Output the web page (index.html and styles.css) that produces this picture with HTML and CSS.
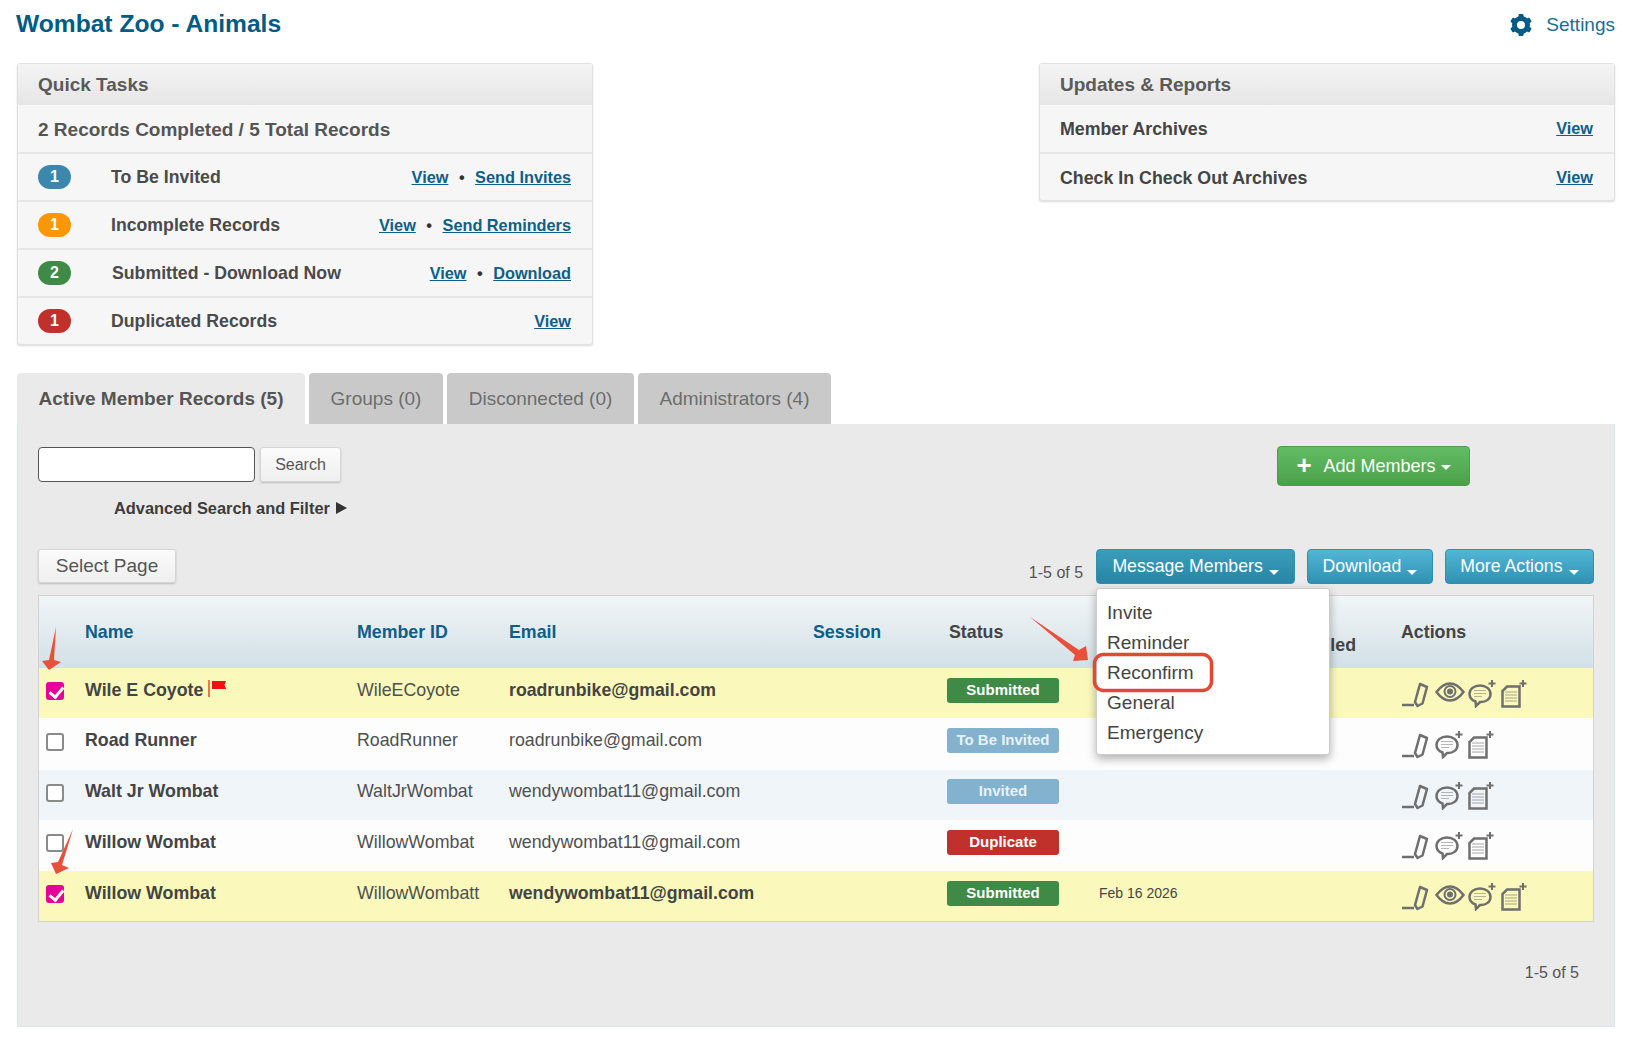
FILE: index.html
```html
<!DOCTYPE html>
<html lang="en">
<head>
    <meta charset="UTF-8">
    <meta name="viewport" content="width=device-width, initial-scale=1.0">
    <title>Wombat Zoo - Animals</title>
    <link rel="stylesheet" href="styles.css">
</head>
<body>
    <svg class="icon-defs" width="0" height="0">
        <symbol id="i-edit" viewBox="0 0 33 28">
            <path d="M0 25h12" fill="none" stroke-width="2.500"/>
            <path d="M13 22l5-18 7 3-4.500 16.500-5 2.500z" fill="none" stroke-width="2.500" stroke-linejoin="round"/>
        </symbol>
        <symbol id="i-eye" viewBox="0 0 33 28">
            <path d="M1.500 12C6 6 10 3.500 15 3.500S24 6 28.500 12C24 18 20 20.500 15 20.500S6 18 1.500 12z" fill="none" stroke-width="2.500"/>
            <circle cx="15" cy="11.500" r="5.500" fill="none" stroke-width="2"/>
            <circle cx="15" cy="11.500" r="3" stroke="none"/>
        </symbol>
        <symbol id="i-note" viewBox="0 0 33 28">
            <path d="M12 5.500c6 0 10.500 3.500 10.500 8.500s-4.500 8-9.500 8h-1l-4 4-.5-4.500C3.500 20 1.500 17.500 1.500 14c0-5 4.500-8.500 10.500-8.500z" fill="none" stroke-width="2.500"/>
            <path d="M6 10.500h12M6 13.500h12M6 16.500h8" fill="none" stroke-width="1" opacity="0.5"/>
            <path d="M24 0v7M20.500 3.500h7" fill="none" stroke-width="2"/>
        </symbol>
        <symbol id="i-doc" viewBox="0 0 33 28">
            <path d="M6 6.500h12.500v20h-17V11z" fill="none" stroke-width="2.500"/>
            <path d="M4 12h12M4 15h12M4 18h12M4 21h12" fill="none" stroke-width="1" opacity="0.6"/>
            <path d="M22 0v7M18.500 3.500h7" fill="none" stroke-width="2"/>
        </symbol>
    </svg>

    <div class="page">
        <header class="top-bar">
            <h1>Wombat Zoo - Animals</h1>
            <a class="settings" href="#">
                <svg class="gear" viewBox="0 0 24 24" width="24" height="24">
                    <circle cx="12" cy="12" r="6.500" fill="none" stroke="#005b85" stroke-width="5"/>
                    <g fill="#005b85">
                        <rect x="9.500" y="1" width="5" height="5" rx="1"/>
                        <rect x="9.500" y="1" width="5" height="5" rx="1" transform="rotate(60 12 12)"/>
                        <rect x="9.500" y="1" width="5" height="5" rx="1" transform="rotate(120 12 12)"/>
                        <rect x="9.500" y="1" width="5" height="5" rx="1" transform="rotate(180 12 12)"/>
                        <rect x="9.500" y="1" width="5" height="5" rx="1" transform="rotate(240 12 12)"/>
                        <rect x="9.500" y="1" width="5" height="5" rx="1" transform="rotate(300 12 12)"/>
                    </g>
                </svg>
                <span>Settings</span>
            </a>
        </header>

        <div class="summary">
            <section class="panel">
                <h2 class="panel-head">Quick Tasks</h2>
                <div class="panel-row panel-row-first"><span class="total">2 Records Completed / 5 Total Records</span></div>
                <div class="panel-row">
                    <span class="count count-blue">1</span>
                    <span class="task">To Be Invited</span>
                    <span class="links"><a href="#">View</a><i>•</i><a href="#">Send Invites</a></span>
                </div>
                <div class="panel-row">
                    <span class="count count-orange">1</span>
                    <span class="task">Incomplete Records</span>
                    <span class="links"><a href="#">View</a><i>•</i><a href="#">Send Reminders</a></span>
                </div>
                <div class="panel-row">
                    <span class="count count-green">2</span>
                    <span class="task task-shift">Submitted - Download Now</span>
                    <span class="links"><a href="#">View</a><i>•</i><a href="#">Download</a></span>
                </div>
                <div class="panel-row">
                    <span class="count count-red">1</span>
                    <span class="task">Duplicated Records</span>
                    <span class="links"><a href="#">View</a></span>
                </div>
            </section>

            <section class="panel">
                <h2 class="panel-head">Updates &amp; Reports</h2>
                <div class="panel-row panel-row-first">
                    <span class="archive">Member Archives</span>
                    <span class="links"><a href="#">View</a></span>
                </div>
                <div class="panel-row">
                    <span class="archive">Check In Check Out Archives</span>
                    <span class="links"><a href="#">View</a></span>
                </div>
            </section>
        </div>

        <nav class="tabs">
            <a class="tab tab-active" href="#">Active Member Records (5)</a>
            <a class="tab" href="#">Groups (0)</a>
            <a class="tab" href="#">Disconnected (0)</a>
            <a class="tab" href="#">Administrators (4)</a>
        </nav>

        <div class="tab-body">
            <div class="search-bar">
                <div class="search-left">
                    <div class="search-form">
                        <input class="search-input" type="text">
                        <button class="btn-plain btn-search">Search</button>
                    </div>
                    <div class="advanced">Advanced Search and Filter <span class="advanced-arrow"></span></div>
                </div>
                <button class="btn-add"><b class="plus">+</b>Add Members<span class="caret caret-add"></span></button>
            </div>

            <div class="toolbar">
                <button class="btn-plain btn-select">Select Page</button>
                <div class="toolbar-right">
                    <span class="paging">1-5 of 5</span>
                    <div class="menu-wrap">
                        <button class="btn-blue btn-open">Message Members<span class="caret"></span></button>
                        <ul class="menu">
                            <li>Invite</li>
                            <li>Reminder</li>
                            <li>Reconfirm</li>
                            <li>General</li>
                            <li>Emergency</li>
                        </ul>
                    </div>
                    <button class="btn-blue">Download<span class="caret"></span></button>
                    <button class="btn-blue">More Actions<span class="caret"></span></button>
                </div>
            </div>

            <table class="members">
                <colgroup>
                    <col class="col-check"><col class="col-name"><col class="col-id"><col class="col-email">
                    <col class="col-session"><col class="col-status"><col class="col-date"><col class="col-actions">
                </colgroup>
                <thead>
                    <tr>
                        <th></th>
                        <th>Name</th>
                        <th>Member ID</th>
                        <th>Email</th>
                        <th>Session</th>
                        <th class="th-dark">Status</th>
                        <th class="th-date">Enrolled</th>
                        <th class="th-dark">Actions</th>
                    </tr>
                </thead>
                <tbody>
                    <tr class="row-done">
                        <td><input class="check" type="checkbox" checked></td>
                        <td class="name">Wile E Coyote <svg class="flag" width="18" height="18" viewBox="0 0 18 18"><rect x="0" y="0" width="2" height="17" fill="#f0764a"/><path d="M4 1h14l-1.500 4 1.500 4H4z" fill="#f01010"/></svg></td>
                        <td>WileECoyote</td>
                        <td class="email">roadrunbike@gmail.com</td>
                        <td></td>
                        <td><span class="status status-green">Submitted</span></td>
                        <td></td>
                        <td class="act-cell"><div class="acts">
                            <svg><use href="#i-edit"/></svg><svg><use href="#i-eye"/></svg><svg><use href="#i-note"/></svg><svg><use href="#i-doc"/></svg>
                        </div></td>
                    </tr>
                    <tr>
                        <td><input class="check" type="checkbox"></td>
                        <td class="name">Road Runner</td>
                        <td>RoadRunner</td>
                        <td>roadrunbike@gmail.com</td>
                        <td></td>
                        <td><span class="status status-light">To Be Invited</span></td>
                        <td></td>
                        <td class="act-cell"><div class="acts">
                            <svg><use href="#i-edit"/></svg><svg><use href="#i-note"/></svg><svg><use href="#i-doc"/></svg>
                        </div></td>
                    </tr>
                    <tr class="row-alt">
                        <td><input class="check" type="checkbox"></td>
                        <td class="name">Walt Jr Wombat</td>
                        <td>WaltJrWombat</td>
                        <td>wendywombat11@gmail.com</td>
                        <td></td>
                        <td><span class="status status-light">Invited</span></td>
                        <td></td>
                        <td class="act-cell"><div class="acts">
                            <svg><use href="#i-edit"/></svg><svg><use href="#i-note"/></svg><svg><use href="#i-doc"/></svg>
                        </div></td>
                    </tr>
                    <tr>
                        <td><input class="check" type="checkbox"></td>
                        <td class="name">Willow Wombat</td>
                        <td>WillowWombat</td>
                        <td>wendywombat11@gmail.com</td>
                        <td></td>
                        <td><span class="status status-red">Duplicate</span></td>
                        <td></td>
                        <td class="act-cell"><div class="acts">
                            <svg><use href="#i-edit"/></svg><svg><use href="#i-note"/></svg><svg><use href="#i-doc"/></svg>
                        </div></td>
                    </tr>
                    <tr class="row-done">
                        <td><input class="check" type="checkbox" checked></td>
                        <td class="name">Willow Wombat</td>
                        <td>WillowWombatt</td>
                        <td class="email">wendywombat11@gmail.com</td>
                        <td></td>
                        <td><span class="status status-green">Submitted</span></td>
                        <td class="date">Feb 16 2026</td>
                        <td class="act-cell"><div class="acts">
                            <svg><use href="#i-edit"/></svg><svg><use href="#i-eye"/></svg><svg><use href="#i-note"/></svg><svg><use href="#i-doc"/></svg>
                        </div></td>
                    </tr>
                </tbody>
            </table>

            <div class="paging paging-bottom">1-5 of 5</div>
        </div>

        <!-- red notes drawn on top of the screen -->
        <svg class="notes" width="1625" height="1037" viewBox="0 0 1625 1037">
            <g fill="#e8503a">
                <path d="M56 627L54 660l7 2-12 8-7-9 7-1z"/>
                <path d="M73 829L62 865l7 3-13 6-5-11 7-1z"/>
                <path d="M1030 617l49 33 7-4 2 14-15 1 2-6z"/>
            </g>
            <rect x="1094.500" y="654.500" width="117" height="36" rx="9" fill="none" stroke="#e04a32" stroke-width="3.500"/>
        </svg>
    </div>
</body>
</html>
```

FILE: styles.css
```css
* {
    box-sizing: border-box;
}

body {
    margin: 0;
    background-color: white;
    color: #444;
    font-family: "Liberation Sans", Arial, sans-serif;
    font-size: 18px;
}

a {
    color: #0d5f8a;
}

.icon-defs {
    position: absolute;
}

.page {
    position: relative;
    height: 1037px;
    padding: 0 10px 0 17px;
    overflow: hidden;
}

.top-bar {
    display: flex;
    justify-content: space-between;
    align-items: center;
    height: 49px;
    margin-bottom: 14px;
}

h1 {
    margin: 0 0 2px -1px;
    font-size: 24.600px;
    color: #005b85;
}

.settings {
    display: flex;
    align-items: center;
    gap: 13px;
    font-size: 19px;
    text-decoration: none;
    color: #1c6c94;
}

.summary {
    display: flex;
    justify-content: space-between;
    align-items: flex-start;
    height: 310px;
}

.panel {
    width: 576px;
    background-color: #f6f6f6;
    border: 1px solid #e2e2e2;
    border-radius: 3px;
    box-shadow: 0 1px 2px rgba(0, 0, 0, 0.15);
}

.panel-head {
    margin: 0;
    height: 41px;
    line-height: 41px;
    padding-left: 20px;
    font-size: 19px;
    color: #5a5a5a;
    background: linear-gradient(#f4f4f4, #e6e6e6);
}

.panel-row {
    display: flex;
    align-items: center;
    height: 48px;
    padding: 0 21px 0 20px;
    border-top: 2px solid #e6e6e6;
}

.panel-row-first {
    height: 47px;
    border-top: none;
}

.total {
    margin-top: 2px;
    font-size: 19px;
    font-weight: bold;
    color: #555;
}

.count {
    width: 33px;
    height: 24px;
    border-radius: 12px;
    text-align: center;
    line-height: 24px;
    font-size: 16px;
    font-weight: bold;
    color: white;
}

.count-blue { background-color: #3d87ad; }
.count-orange { background-color: #fb9705; }
.count-green { background-color: #3f8a46; }
.count-red { background-color: #c0312c; }

.task {
    margin-left: 40px;
    font-size: 17.700px;
    font-weight: bold;
    color: #4a4a4a;
}

.task-shift {
    margin-left: 41px;
}

.archive {
    margin-top: 2px;
    font-size: 17.800px;
    font-weight: bold;
    color: #444;
}

.links {
    margin-left: auto;
    font-size: 16.300px;
    font-weight: bold;
}

.links i {
    margin: 0 10.500px;
    font-style: normal;
    color: #333;
}

.tabs {
    display: flex;
    gap: 4px;
    height: 51px;
}

.tab {
    width: 134px;
    padding-top: 15px;
    text-align: center;
    font-size: 19px;
    text-decoration: none;
    color: #6d6d6d;
    background-color: #c9c9c9;
    border-radius: 4px 4px 0 0;
}

.tab:nth-child(3) { width: 187px; }
.tab:nth-child(4) { width: 193px; }

.tab-active {
    width: 288px;
    font-weight: bold;
    color: #555;
    background-color: #eaeaea;
}

.tab-body {
    height: 603px;
    padding: 23px 20px 0 20px;
    background-color: #eaeaea;
    border: 1px solid #d8e6ee;
    border-top: none;
}

.search-bar {
    display: flex;
    justify-content: space-between;
    align-items: flex-start;
    height: 102px;
    padding-right: 124px;
}

.search-form {
    display: flex;
    gap: 5px;
}

.search-input {
    width: 217px;
    height: 35px;
    border: 1px solid #555;
    border-radius: 4px;
    background-color: white;
}

.btn-plain {
    border: 1px solid #d6d6d6;
    border-radius: 3px;
    background: linear-gradient(#fbfbfb, #efefef);
    box-shadow: 0 1px 2px rgba(0, 0, 0, 0.2);
    color: #555;
    font-family: inherit;
}

.btn-search {
    width: 81px;
    font-size: 16px;
}

.advanced {
    margin: 17px 0 0 76px;
    font-size: 16.400px;
    font-weight: bold;
    color: #3c3c3c;
}

.advanced-arrow {
    display: inline-block;
    margin-left: 2px;
    border-left: 11px solid #333;
    border-top: 6px solid transparent;
    border-bottom: 6px solid transparent;
}

.btn-add {
    width: 193px;
    height: 40px;
    margin-top: -1px;
    border: 1px solid #4c9c4c;
    border-radius: 4px;
    background: linear-gradient(#63bd63, #4aa04a);
    color: white;
    font-family: inherit;
    font-size: 18px;
}

.plus {
    margin-right: 12px;
    font-size: 26px;
    line-height: 20px;
    vertical-align: -2px;
}

.caret {
    display: inline-block;
    margin-left: 6px;
    vertical-align: -3px;
    border-top: 5px solid white;
    border-left: 5px solid transparent;
    border-right: 5px solid transparent;
}

.caret-add {
    vertical-align: 2px;
    margin-left: 5px;
}

.toolbar {
    display: flex;
    justify-content: space-between;
    align-items: flex-start;
    height: 47px;
}

.btn-select {
    width: 138px;
    height: 34px;
    font-size: 19px;
}

.toolbar-right {
    display: flex;
    gap: 12px;
    height: 36px;
}

.paging {
    font-size: 16px;
    color: #555;
}

.toolbar-right .paging {
    align-self: flex-end;
    margin-right: 1px;
    padding-bottom: 3px;
}

.btn-blue {
    height: 35px;
    padding: 0 14.500px;
    border: 1px solid #2f8fb0;
    border-radius: 4px;
    background: linear-gradient(#52b6d6, #2f92b3);
    color: white;
    font-family: inherit;
    font-size: 17.700px;
    white-space: nowrap;
}

.btn-open {
    width: 199px;
    padding: 0;
    background: linear-gradient(#3a9dbc, #2785a5);
}

.menu-wrap {
    position: relative;
}

.menu {
    position: absolute;
    top: 39px;
    left: 0;
    z-index: 2;
    width: 234px;
    height: 167px;
    margin: 0;
    padding: 9px 0 0 10px;
    list-style: none;
    background-color: white;
    border: 1px solid #ccc;
    border-radius: 3px;
    box-shadow: 0 4px 10px rgba(0, 0, 0, 0.3);
    font-size: 19px;
    color: #444;
}

.menu li {
    height: 30px;
    line-height: 30px;
}

.members {
    width: 1554px;
    margin-left: 1px;
    table-layout: fixed;
    border-collapse: collapse;
    outline: 1px solid #d2d2d2;
}

.col-check { width: 46px; }
.col-name { width: 272px; }
.col-id { width: 152px; }
.col-email { width: 304px; }
.col-session { width: 134px; }
.col-status { width: 152px; }
.col-date { width: 302px; }
.col-actions { width: 192px; }

.members th {
    height: 72px;
    padding: 0;
    text-align: left;
    font-size: 17.800px;
    color: #0d5f8a;
    background: linear-gradient(#f1f5f6, #d2e0e7);
}

.members th:nth-child(6) {
    padding-left: 2px;
}

.members th.th-dark {
    color: #444;
}

.members th.th-date {
    padding: 26px 45px 0 0;
    text-align: right;
    color: #444;
}

.members td {
    height: 50px;
    padding: 0 0 6px;
    font-size: 17.800px;
    background-color: #fdfdfd;
    color: #505050;
}

.members tbody tr:nth-child(even) td {
    height: 51.500px;
}

.members .row-alt td {
    background-color: #f0f5fa;
}

.members .row-done td {
    background-color: #faf8bb;
}

.members .name {
    font-weight: bold;
    color: #444;
}

.members .email {
    font-size: 17.700px;
    font-weight: bold;
    color: #444;
}

.members .date {
    font-size: 14px;
    color: #444;
}

.members .act-cell {
    padding: 2px 0 0;
}

.flag {
    vertical-align: -2px;
}

.check {
    display: block;
    position: relative;
    appearance: none;
    width: 18px;
    height: 18px;
    margin: 2px 0 0 7px;
    background-color: white;
    border: 2px solid #8a8a8a;
    border-radius: 3px;
}

.check:checked {
    background-color: #e6009a;
    border-color: #e6009a;
}

.check:checked::after {
    content: "";
    position: absolute;
    left: 4px;
    top: 0;
    width: 6px;
    height: 11px;
    border: solid white;
    border-width: 0 3px 3px 0;
    transform: rotate(40deg);
}

.status {
    display: block;
    width: 112px;
    height: 25px;
    line-height: 24px;
    text-align: center;
    border-radius: 3px;
    font-size: 15px;
    font-weight: bold;
    color: white;
}

.status-green { background-color: #3f8a46; }
.status-light { background-color: #82b2ce; color: #e8f1f6; }
.status-red { background-color: #c0312c; }

.acts {
    display: flex;
    padding-left: 1px;
}

.acts svg {
    width: 33px;
    height: 28px;
    stroke: #6f6f6f;
    fill: #6f6f6f;
}

.paging-bottom {
    margin-top: 43px;
    padding-right: 15px;
    text-align: right;
}

.notes {
    position: absolute;
    top: 0;
    left: 0;
    z-index: 3;
    pointer-events: none;
}
```
